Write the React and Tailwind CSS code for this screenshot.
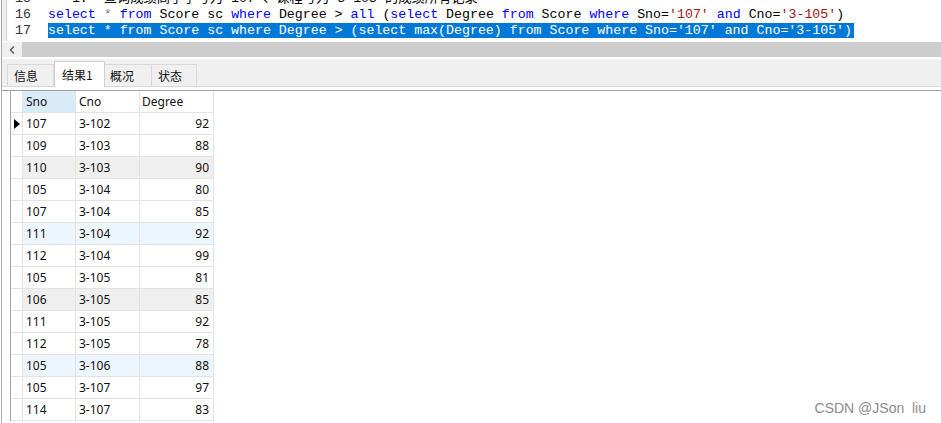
import React from "react";

const K = ({ children }) => <span className="text-[#0000ff]">{children}</span>;
const S = ({ children }) => <span className="text-[#a31515]">{children}</span>;
const G = ({ children }) => <span className="text-[#808080]">{children}</span>;

const rows = [
  ["107", "3-102", "92", "w"],
  ["109", "3-103", "88", "w"],
  ["110", "3-103", "90", "g"],
  ["105", "3-104", "80", "w"],
  ["107", "3-104", "85", "w"],
  ["111", "3-104", "92", "b"],
  ["112", "3-104", "99", "w"],
  ["105", "3-105", "81", "w"],
  ["106", "3-105", "85", "g"],
  ["111", "3-105", "92", "w"],
  ["112", "3-105", "78", "w"],
  ["105", "3-106", "88", "b"],
  ["105", "3-107", "97", "w"],
  ["114", "3-107", "83", "w"],
];

const bgFor = (k) =>
  k === "g" ? "bg-[#efefef]" : k === "b" ? "bg-[#edf5fd]" : "bg-white";

export default function App() {
  return (
    <div className="w-[941px] h-[423px] overflow-hidden bg-white relative flex">
      <div className="w-[1px] shrink-0 bg-white" />
      <div className="w-[1px] shrink-0 bg-[#a8a8a8]" />
      <div className="flex-1 flex flex-col min-w-0">
        {/* Editor */}
        <div className="h-[41px] flex overflow-hidden shrink-0 font-['Liberation_Mono','Noto_Sans_CJK_SC',monospace] text-[13.28px] leading-[16px]">
          <div className="w-[5px] shrink-0 bg-[#f0f0f0] border-r border-[#d0d0d0]" />
          <div className="w-[35px] shrink-0 text-right pr-[11px] text-[#333] -mt-[9px]">
            <div className="h-[16px]">15</div>
            <div className="h-[16px]">16</div>
            <div className="h-[16px]">17</div>
          </div>
          <div className="pl-[6px] whitespace-pre text-black -mt-[9px]">
            <div className="h-[16px]">{"   1.  查询成绩高于学号为“107”、课程号为“3-105”的成绩所有记录"}</div>
            <div className="h-[16px]">
              <K>select</K> <G>*</G> <K>from</K> Score sc <K>where</K> Degree &gt; <K>all</K> (<K>select</K> Degree <K>from</K> Score <K>where</K> Sno=<S>'107'</S> <K>and</K> Cno=<S>'3-105'</S>)
            </div>
            <div className="h-[16px]">
              <span className="bg-[#0078d7] text-white pr-[2px]">
                {"select * from Score sc where Degree > (select max(Degree) from Score where Sno='107' and Cno='3-105')"}
              </span>
            </div>
          </div>
        </div>

        {/* Horizontal scrollbar */}
        <div className="mt-[1px] h-[15px] flex shrink-0">
          <div className="w-[20px] bg-[#f0f0f0] flex items-center justify-center">
            <svg width="6" height="8" viewBox="0 0 6 8">
              <path d="M5 0.5 L1.5 4 L5 7.5" stroke="#606060" strokeWidth="1.6" fill="none" />
            </svg>
          </div>
          <div className="flex-1 bg-[#cdcdcd]" />
        </div>

        <div className="h-[2px] shrink-0" />

        {/* Tabs */}
        <div className="h-[28px] shrink-0 bg-[#f0f0f0] border-b border-[#d9d9d9] flex items-end pl-[5px] font-['Noto_Sans_CJK_SC',sans-serif] text-[12px] text-[#111]">
          <div className="w-[47px] h-[22px] border border-b-0 border-[#d9d9d9] flex items-center pl-[6px]">信息</div>
          <div className="w-[51px] h-[26px] -mb-[1px] bg-white border border-b-0 border-[#d0d0d0] flex items-center pl-[7px]">结果1</div>
          <div className="w-[47px] h-[22px] border border-b-0 border-l-0 border-[#d9d9d9] flex items-center pl-[5px]">概况</div>
          <div className="w-[45px] h-[22px] border border-b-0 border-l-0 border-[#d9d9d9] flex items-center pl-[6px]">状态</div>
        </div>

        <div className="h-[3px] shrink-0" />

        {/* Grid */}
        <div className="flex-1 border-t border-[#a0a0a0] pl-[8px] font-['Noto_Sans',sans-serif] text-[12px] text-[#111]">
          <div className="border-l border-[#a8a8a8] w-fit">
            <div className="flex h-[22px]">
              <div className="w-[12px] border-r border-b border-[#e3e3e3] bg-white" />
              <div className="w-[53px] border-r border-b border-[#e3e3e3] bg-[#d9ebf9] pl-[3px] flex items-center">Sno</div>
              <div className="w-[64px] border-r border-b border-[#e3e3e3] bg-white pl-[3px] flex items-center">Cno</div>
              <div className="w-[74px] border-r border-b border-[#e3e3e3] bg-white pl-[2px] flex items-center">Degree</div>
            </div>
            {rows.map((r, i) => (
              <div key={i} className="flex h-[22px]">
                <div className="w-[12px] border-r border-b border-[#e3e3e3] bg-white flex items-center justify-center">
                  {i === 0 && (
                    <svg width="6" height="10" viewBox="0 0 6 10">
                      <path d="M0 0 L6 5 L0 10 Z" fill="#000" />
                    </svg>
                  )}
                </div>
                <div className={`w-[53px] border-r border-b border-[#e3e3e3] pl-[3px] flex items-center ${bgFor(r[3])}`}>{r[0]}</div>
                <div className={`w-[64px] border-r border-b border-[#e3e3e3] pl-[3px] flex items-center ${bgFor(r[3])}`}>{r[1]}</div>
                <div className={`w-[74px] border-r border-b border-[#e3e3e3] pr-[4px] flex items-center justify-end ${bgFor(r[3])}`}>{r[2]}</div>
              </div>
            ))}
          </div>
        </div>
      </div>

      {/* Watermark */}
      <div className="absolute right-[15px] top-[400px] whitespace-pre font-['Liberation_Sans',sans-serif] text-[14px] leading-[16px] text-[#8c8c8c]">
        {"CSDN @JSon  liu"}
      </div>
    </div>
  );
}
